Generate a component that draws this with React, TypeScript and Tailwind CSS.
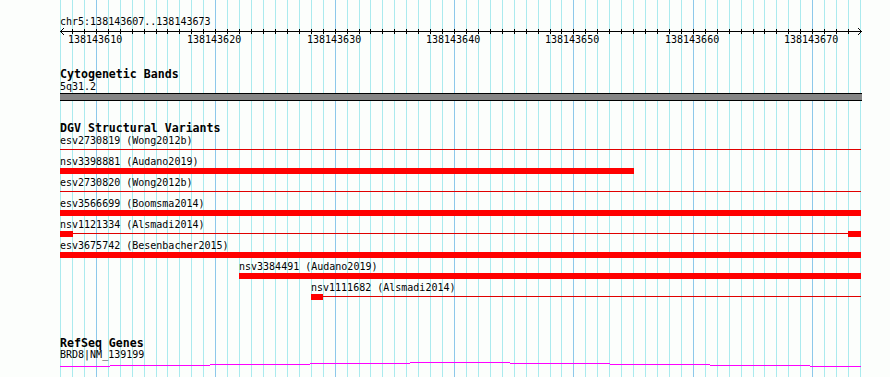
import React from "react";

const X = (i: number) => Math.round(60 + i * 11.94);
const gridIdx = Array.from({ length: 68 }, (_, i) => i);

type Feat = {
  label: string;
  labelX: number;
  thin?: [number, number];
  bars: [number, number][];
};

const feats: Feat[] = [
  { label: "esv2730819 (Wong2012b)", labelX: 60, thin: [60, 861], bars: [] },
  { label: "nsv3398881 (Audano2019)", labelX: 60, bars: [[60, 634]] },
  { label: "esv2730820 (Wong2012b)", labelX: 60, thin: [60, 861], bars: [] },
  { label: "esv3566699 (Boomsma2014)", labelX: 60, bars: [[60, 861]] },
  {
    label: "nsv1121334 (Alsmadi2014)",
    labelX: 60,
    thin: [60, 861],
    bars: [
      [60, 73],
      [848, 861],
    ],
  },
  { label: "esv3675742 (Besenbacher2015)", labelX: 60, bars: [[60, 861]] },
  { label: "nsv3384491 (Audano2019)", labelX: 239, bars: [[239, 861]] },
  {
    label: "nsv1111682 (Alsmadi2014)",
    labelX: 311,
    thin: [311, 861],
    bars: [[311, 323]],
  },
];

const rulerLabels = [3, 13, 23, 33, 43, 53, 63].map((i) => ({
  x: X(i),
  text: String(138143607 + i),
}));

const magenta: [number, number, number][] = [
  [60, 110, 4],
  [110, 210, 3],
  [210, 310, 2],
  [310, 410, 1],
  [410, 510, 0],
  [510, 610, 1],
  [610, 710, 2],
  [710, 810, 3],
  [810, 861, 4],
];

function Grid() {
  return (
    <svg
      className="absolute inset-0"
      width={890}
      height={377}
      shapeRendering="crispEdges"
    >
      {gridIdx.map((i) => (
        <rect
          key={i}
          x={X(i)}
          y={0}
          width={1}
          height={377}
          fill={(i - 3) % 10 === 0 ? "#8cc8ea" : "#aaeaee"}
        />
      ))}
    </svg>
  );
}

function Ruler() {
  const arrow: [number, number][] = [
    [1, 3],
    [1, 5],
    [2, 2],
    [2, 6],
    [3, 1],
    [3, 7],
  ];
  return (
    <svg width={802} height={8} className="block" shapeRendering="crispEdges">
      <rect x={0} y={4} width={802} height={1} fill="#000" />
      {gridIdx.slice(1, 67).map((i) => (
        <rect key={i} x={X(i) - 60} y={2} width={1} height={5} fill="#000" />
      ))}
      {arrow.map(([dx, y], k) => (
        <rect key={"l" + k} x={dx} y={y} width={1} height={1} fill="#000" />
      ))}
      {arrow.map(([dx, y], k) => (
        <rect key={"r" + k} x={801 - dx} y={y} width={1} height={1} fill="#000" />
      ))}
    </svg>
  );
}

function FeatureRow({ f }: { f: Feat }) {
  return (
    <div className="flex flex-col">
      <div className="h-[14px] pt-[2px]">
        <div
          className="text-[10px] leading-[11px] whitespace-pre"
          style={{ marginLeft: f.labelX - 60 }}
        >
          {f.label}
        </div>
      </div>
      <div className="relative h-[7px] w-[801px]">
        {f.thin && (
          <div
            className="absolute top-[2px] h-px bg-[#e00000]"
            style={{ left: f.thin[0] - 60, width: f.thin[1] - f.thin[0] }}
          />
        )}
        {f.bars.map(([a, b], k) => (
          <div
            key={k}
            className="absolute top-0 h-[6px] bg-[#ff0000]"
            style={{ left: a - 60, width: b - a }}
          />
        ))}
      </div>
    </div>
  );
}

export default function App() {
  return (
    <div className="relative w-[890px] h-[377px] overflow-hidden bg-[#fcfefc] text-black font-['DejaVu_Sans_Mono','Liberation_Mono',monospace]">
      <Grid />
      <div className="relative flex flex-col pl-[60px]">
        <div className="h-[17px]" />
        <div className="h-[10px] text-[10px] leading-[10px] whitespace-pre">
          chr5:138143607..138143673
        </div>
        <Ruler />
        <div className="relative h-[10px] w-[802px]">
          {rulerLabels.map((l) => (
            <span
              key={l.text}
              className="absolute top-0 text-[10px] leading-[10px] whitespace-pre"
              style={{ left: l.x - 60 - 28 }}
            >
              {l.text}
            </span>
          ))}
        </div>
        <div className="h-[23px]" />
        <div className="h-[12px] text-[11.6px] leading-[12px] font-bold whitespace-pre">
          Cytogenetic Bands
        </div>
        <div className="h-[13px] text-[10px] leading-[13px] whitespace-pre">
          5q31.2
        </div>
        <div className="h-[8px] w-[802px] border-y border-black bg-[#858585]" />
        <div className="h-[22px]" />
        <div className="h-[10px] text-[11.6px] leading-[10px] font-bold whitespace-pre">
          DGV Structural Variants
        </div>
        {feats.map((f) => (
          <FeatureRow key={f.label} f={f} />
        ))}
        <div className="h-[37px]" />
        <div className="h-[10px] text-[11.6px] leading-[10px] font-bold whitespace-pre">
          RefSeq Genes
        </div>
        <div className="h-[14px] text-[10px] leading-[14px] whitespace-pre">
          BRD8|NM_139199
        </div>
        <svg width={802} height={5} className="block" shapeRendering="crispEdges">
          {magenta.map(([a, b, y], k) => (
            <rect
              key={k}
              x={a - 60}
              y={y}
              width={b - a}
              height={1}
              fill="#ff00ff"
            />
          ))}
        </svg>
      </div>
    </div>
  );
}
